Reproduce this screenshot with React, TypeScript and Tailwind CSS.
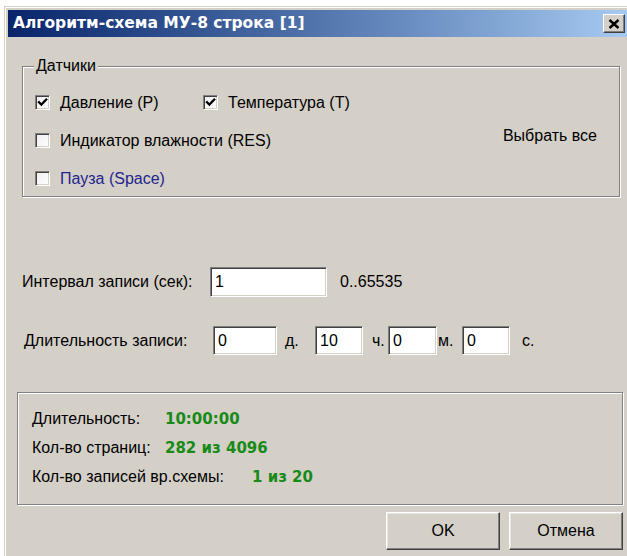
import React from "react";

const FACE = "bg-[#d4d0c8]";
const UI_FONT = "font-['Liberation_Sans',Arial,sans-serif]";

function Sunken({ className = "", children }: { className?: string; children?: React.ReactNode }) {
  return (
    <div
      className={`bg-white border border-t-[#808080] border-l-[#808080] border-b-white border-r-white shadow-[inset_1px_1px_0_#404040,inset_-1px_-1px_0_#d4d0c8] ${className}`}
    >
      {children}
    </div>
  );
}

function Check({ checked }: { checked?: boolean }) {
  return (
    <div className="w-[15px] h-[15px] shrink-0 border border-t-[#808080] border-l-[#808080] border-b-white border-r-white shadow-[inset_1px_1px_0_#404040,inset_-1px_-1px_0_#d4d0c8] bg-gradient-to-br from-[#eeeeee] to-white flex items-center justify-center">
      {checked && (
        <svg width="11" height="11" viewBox="0 0 11 11">
          <path d="M2 5.2 L4.4 7.6 L9.2 2.6" fill="none" stroke="#000" strokeWidth="2.3" strokeLinecap="square" />
        </svg>
      )}
    </div>
  );
}

function Field({ w, value }: { w: string; value: string }) {
  return (
    <Sunken className={`${w} h-[29px] flex items-center pl-[4px]`}>
      <span className="text-[16px] leading-none text-black">{value}</span>
    </Sunken>
  );
}

function Button({ label }: { label: string }) {
  return (
    <div className="w-[114px] h-[38px] flex items-center justify-center bg-[#d4d0c8] border border-t-white border-l-white border-b-[#404040] border-r-[#404040] shadow-[inset_-1px_-1px_0_#808080,inset_1px_1px_0_#e8e6e0]">
      <span className="text-[16px] leading-none text-black">{label}</span>
    </div>
  );
}

export default function App() {
  return (
    <div className={`w-[627px] h-[556px] overflow-hidden bg-white ${UI_FONT}`}>
      <div className="ml-[4px] mt-[6px] w-[623px] h-[550px] border-l border-t border-[#d4d0c8]">
        <div className={`h-full border-l border-t border-white pl-[2px] pt-[2px] ${FACE} flex flex-col`}>
          {/* title bar */}
          <div className="h-[27px] shrink-0 bg-gradient-to-r from-[#0a246a] to-[#a6caf0] flex items-center pl-[5px] pr-[2px]">
            <span className="text-white font-bold text-[15.5px] leading-none font-['DejaVu_Sans',Verdana,sans-serif]">
              Алгоритм-схема МУ-8 строка [1]
            </span>
            <div className="ml-auto w-[22px] h-[19px] bg-[#d4d0c8] border border-t-white border-l-white border-b-[#404040] border-r-[#404040] shadow-[inset_-1px_-1px_0_#808080] flex items-center justify-center">
              <svg width="12" height="10" viewBox="0 0 12 10">
                <path d="M1.5 1 L10.5 9 M10.5 1 L1.5 9" stroke="#000" strokeWidth="2.4" />
              </svg>
            </div>
          </div>

          {/* sensors group */}
          <div className="relative ml-[14px] mt-[29px] w-[598px] h-[131px] border border-[#808080] shadow-[inset_1px_1px_0_#fff,1px_1px_0_#fff] pl-[12px] pt-[28px] flex flex-col gap-[23px]">
            <span className={`absolute -top-[10px] left-[11px] px-[2px] ${FACE} text-[16px] leading-[18px] text-black`}>
              Датчики
            </span>
            <div className="h-[15px] flex items-center">
              <div className="w-[168px] flex items-center gap-[10px]">
                <Check checked />
                <span className="text-[16px] leading-none text-black">Давление (P)</span>
              </div>
              <div className="flex items-center gap-[10px]">
                <Check checked />
                <span className="text-[16px] leading-none text-black">Температура (T)</span>
              </div>
            </div>
            <div className="h-[15px] flex items-center">
              <div className="flex items-center gap-[10px]">
                <Check />
                <span className="text-[16px] leading-none text-black">Индикатор влажности (RES)</span>
              </div>
              <span className="ml-auto mr-[22px] -mt-[10px] text-[16px] leading-none text-black">Выбрать все</span>
            </div>
            <div className="h-[15px] flex items-center">
              <div className="flex items-center gap-[10px]">
                <Check />
                <span className="text-[16px] leading-none text-[#24248f]">Пауза (Space)</span>
              </div>
            </div>
          </div>

          {/* record interval */}
          <div className="ml-[14px] mt-[70px] flex items-center">
            <span className="w-[188px] text-[16px] leading-none text-black">Интервал записи (сек):</span>
            <Sunken className="w-[117px] h-[30px] flex items-center pl-[4px]">
              <span className="text-[16px] leading-none text-black">1</span>
            </Sunken>
            <span className="ml-[13px] text-[16px] leading-none text-black">0..65535</span>
          </div>

          {/* record duration */}
          <div className="ml-[16px] mt-[29px] flex items-center">
            <span className="w-[189px] text-[16px] leading-none text-black">Длительность записи:</span>
            <Field w="w-[64px]" value="0" />
            <span className="ml-[8px] w-[30px] text-[16px] leading-none text-black">д.</span>
            <Field w="w-[48px]" value="10" />
            <span className="ml-[9px] w-[16px] text-[16px] leading-none text-black">ч.</span>
            <Field w="w-[49px]" value="0" />
            <span className="ml-[1px] w-[24px] text-[16px] leading-none text-black">м.</span>
            <Field w="w-[48px]" value="0" />
            <span className="ml-[12px] text-[16px] leading-none text-black">с.</span>
          </div>

          {/* summary group */}
          <div className="ml-[9px] mt-[37px] w-[606px] h-[113px] border border-[#808080] shadow-[inset_1px_1px_0_#fff,1px_1px_0_#fff] pl-[14px] pt-[17px] flex flex-col gap-[11px]">
            <div className="h-[18px] flex items-center">
              <span className="w-[133px] text-[16px] leading-none text-black">Длительность:</span>
              <span className="font-bold text-[15px] leading-none text-[#178a17] font-['DejaVu_Sans',Verdana,sans-serif]">10:00:00</span>
            </div>
            <div className="h-[18px] flex items-center">
              <span className="w-[133px] text-[16px] leading-none text-black">Кол-во страниц:</span>
              <span className="font-bold text-[15px] leading-none text-[#178a17] font-['DejaVu_Sans',Verdana,sans-serif]">282 из 4096</span>
            </div>
            <div className="h-[18px] flex items-center">
              <span className="w-[220px] text-[16px] leading-none text-black">Кол-во записей вр.схемы:</span>
              <span className="font-bold text-[15px] leading-none text-[#178a17] font-['DejaVu_Sans',Verdana,sans-serif]">1 из 20</span>
            </div>
          </div>

          {/* buttons */}
          <div className="mt-[7px] mr-[4px] flex justify-end gap-[9px]">
            <Button label="OK" />
            <Button label="Отмена" />
          </div>
        </div>
      </div>
    </div>
  );
}
